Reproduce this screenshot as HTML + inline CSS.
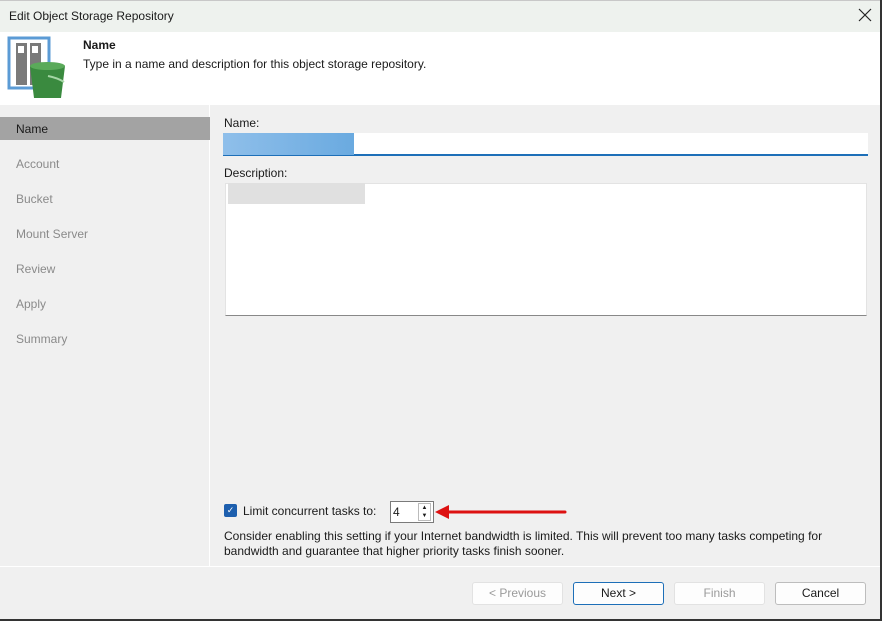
<!DOCTYPE html>
<html><head><style>
*{margin:0;padding:0;box-sizing:border-box}
body{width:882px;height:621px;font-family:"Liberation Sans",sans-serif;font-size:12px;color:#1a1a1a;background:#f0f0f0;position:relative;overflow:hidden}
.a{position:absolute}
.nav{position:absolute;left:16px;color:#8a8a8a;font-size:12px}
.btn{position:absolute;top:582px;height:23px;width:91px;border:1px solid #bdbdbd;background:#fdfdfd;border-radius:3px;text-align:center;line-height:21px;font-size:12px}
</style></head><body>
<div class="a" style="left:0;top:0;width:882px;height:32px;background:#eef2ee;border-top:1px solid #c8c8c8"></div>
<div class="a" style="left:9px;top:9px;font-size:12px">Edit Object Storage Repository</div>
<svg class="a" style="left:858px;top:8px" width="14" height="14"><path d="M1 1L13 13M13 1L1 13" stroke="#222" stroke-width="1.2"/></svg>
<div class="a" style="left:0;top:32px;width:882px;height:73px;background:#fff"></div>
<svg class="a" style="left:6px;top:36px" width="62" height="64">
<rect x="3" y="2" width="40" height="50" fill="#fff" stroke="#5b9bd5" stroke-width="3"/>
<rect x="10" y="7" width="11" height="42" fill="#7a7a7a"/><rect x="24" y="7" width="11" height="42" fill="#7a7a7a"/>
<rect x="12" y="10" width="6" height="7" fill="#fff"/><rect x="26" y="10" width="6" height="7" fill="#fff"/>
<path d="M24 30 h35 l-4 32 h-27z" fill="#3a8a3f"/><ellipse cx="41.5" cy="30" rx="17.5" ry="4" fill="#5aaa5a"/>
<path d="M42 40 q10 2 16 6" stroke="#a5d6a5" stroke-width="2" fill="none"/>
</svg>
<div class="a" style="left:83px;top:38px;font-weight:bold">Name</div>
<div class="a" style="left:83px;top:57px">Type in a name and description for this object storage repository.</div>
<div class="a" style="left:0;top:105px;width:210px;height:461px;background:#f0f0f0;border-right:1px solid #fff"></div>
<div class="a" style="left:0;top:117px;width:210px;height:23px;background:#a3a3a3"></div>
<div class="nav" style="top:122px;color:#1a1a1a">Name</div>
<div class="nav" style="top:157px">Account</div>
<div class="nav" style="top:192px">Bucket</div>
<div class="nav" style="top:227px">Mount Server</div>
<div class="nav" style="top:262px">Review</div>
<div class="nav" style="top:297px">Apply</div>
<div class="nav" style="top:332px">Summary</div>
<div class="a" style="left:224px;top:116px">Name:</div>
<div class="a" style="left:223px;top:133px;width:645px;height:23px;background:#fff;border-bottom:2px solid #1d6fb8"></div>
<div class="a" style="left:223px;top:133px;width:131px;height:22px;background:linear-gradient(90deg,#8fbfea,#6aaae0)"></div>
<div class="a" style="left:224px;top:166px">Description:</div>
<div class="a" style="left:225px;top:183px;width:642px;height:133px;background:#fff;border:1px solid #e3e3e3;border-bottom:1px solid #888"></div>
<div class="a" style="left:228px;top:183px;width:137px;height:21px;background:#e0e0e0"></div>
<div class="a" style="left:224px;top:504px;width:13px;height:13px;background:#1d5fae;border-radius:2px;color:#fff;font-size:9px;text-align:center;line-height:13px">✓</div>
<div class="a" style="left:243px;top:504px">Limit concurrent tasks to:</div>
<div class="a" style="left:390px;top:501px;width:44px;height:22px;background:#fff;border:1px solid #7a7a7a"></div>
<div class="a" style="left:393px;top:505px">4</div>
<div class="a" style="left:418px;top:503px;width:13px;height:18px;border:1px solid #bbb;font-size:6px;text-align:center;line-height:8px">▲<br>▼</div>
<svg class="a" style="left:433px;top:503px" width="136" height="18"><path d="M14 9 H132" stroke="#d11" stroke-width="3" stroke-linecap="round"/><path d="M2 9 L16 2 L16 16z" fill="#d11"/></svg>
<div class="a" style="left:224px;top:529px;line-height:15px">Consider enabling this setting if your Internet bandwidth is limited. This will prevent too many tasks competing for<br>bandwidth and guarantee that higher priority tasks finish sooner.</div>
<div class="a" style="left:0;top:566px;width:882px;height:1px;background:#fff"></div>
<div class="btn" style="left:472px;color:#9a9a9a;border-color:#e2e2e2">&lt; Previous</div>
<div class="btn" style="left:573px;border:1px solid #1d6fb8">Next &gt;</div>
<div class="btn" style="left:674px;color:#9a9a9a;border-color:#e2e2e2">Finish</div>
<div class="btn" style="left:775px">Cancel</div>
<div class="a" style="left:0;top:619px;width:882px;height:2px;background:#333"></div>
<div class="a" style="left:880px;top:0;width:2px;height:621px;background:#333"></div>
</body></html>
